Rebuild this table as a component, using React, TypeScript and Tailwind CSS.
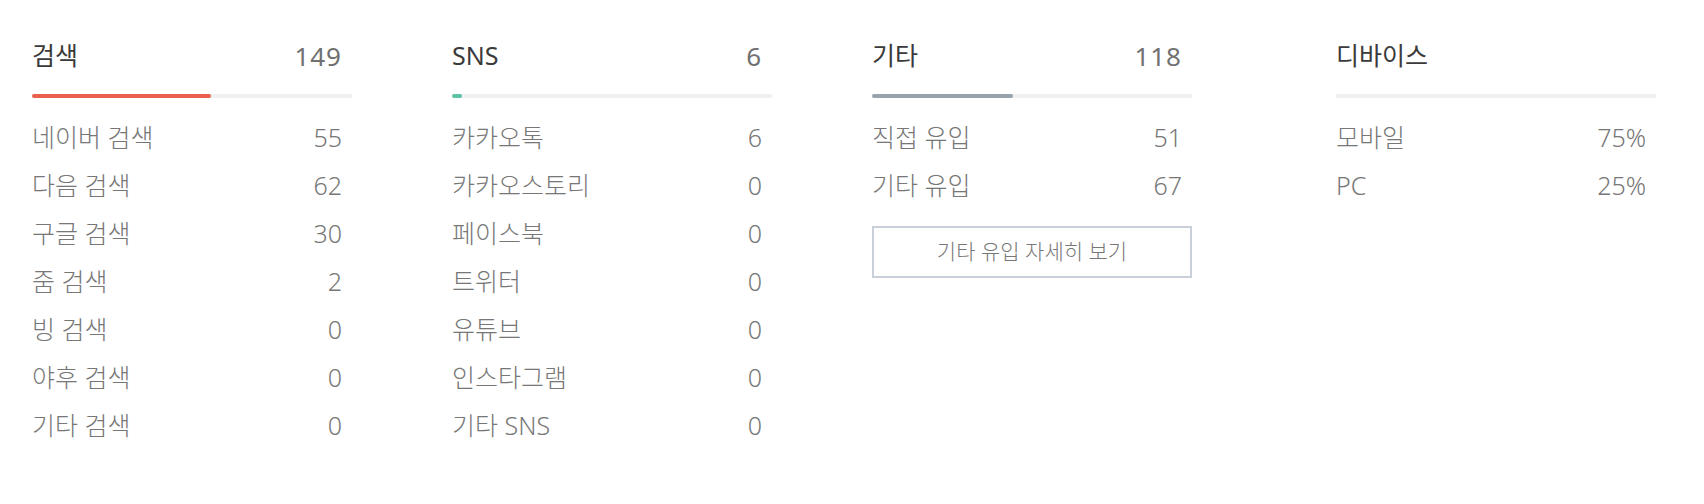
import React from "react";

type Row = { label: string; value: string };

type Group = {
  title: string;
  total?: string;
  fill: string;
  barColor: string;
  rows: Row[];
  button?: string;
  className: string;
};

const GROUPS: Group[] = [
  {
    title: "검색",
    total: "149",
    fill: "w-[56%]",
    barColor: "bg-[#e9604c]",
    className: "mr-[100px]",
    rows: [
      { label: "네이버 검색", value: "55" },
      { label: "다음 검색", value: "62" },
      { label: "구글 검색", value: "30" },
      { label: "줌 검색", value: "2" },
      { label: "빙 검색", value: "0" },
      { label: "야후 검색", value: "0" },
      { label: "기타 검색", value: "0" },
    ],
  },
  {
    title: "SNS",
    total: "6",
    fill: "w-[10px]",
    barColor: "bg-[#5cc3a8]",
    className: "mr-[100px]",
    rows: [
      { label: "카카오톡", value: "6" },
      { label: "카카오스토리", value: "0" },
      { label: "페이스북", value: "0" },
      { label: "트위터", value: "0" },
      { label: "유튜브", value: "0" },
      { label: "인스타그램", value: "0" },
      { label: "기타 SNS", value: "0" },
    ],
  },
  {
    title: "기타",
    total: "118",
    fill: "w-[44%]",
    barColor: "bg-[#98a2ab]",
    className: "mr-[144px]",
    rows: [
      { label: "직접 유입", value: "51" },
      { label: "기타 유입", value: "67" },
    ],
    button: "기타 유입 자세히 보기",
  },
  {
    title: "디바이스",
    fill: "w-0",
    barColor: "bg-transparent",
    className: "",
    rows: [
      { label: "모바일", value: "75%" },
      { label: "PC", value: "25%" },
    ],
  },
];

function StatGroup({ group }: { group: Group }) {
  return (
    <div className={`w-[320px] shrink-0 ${group.className}`}>
      {/* Header */}
      <div className="flex h-[40px] items-center justify-between pr-[10px]">
        <span className="text-[25px] font-normal text-[#3a3a3a]">{group.title}</span>
        {group.total && <span className="text-[26px] font-normal tracking-[1px] text-[#707070]">{group.total}</span>}
      </div>

      {/* Progress */}
      <div className="mt-[18px] h-[4px] w-full rounded-full bg-[#f0f0f0]">
        <div className={`h-full rounded-full ${group.fill} ${group.barColor}`}></div>
      </div>

      {/* Rows */}
      <div className="mt-[16px]">
        {group.rows.map((row) => (
          <div
            key={row.label}
            className="flex h-[48px] items-center justify-between pr-[10px] text-[25px] font-light text-[#777]"
          >
            <span>{row.label}</span>
            <span>{row.value}</span>
          </div>
        ))}
      </div>

      {group.button && (
        <button className="mt-[16px] h-[52px] w-full border-2 border-[#c9d0da] bg-white text-[21px] font-light text-[#777]">
          {group.button}
        </button>
      )}
    </div>
  );
}

export default function App() {
  return (
    <div
      className="flex min-h-[504px] w-full bg-white pl-[32px] pt-[36px]"
      style={{ fontFamily: '"Noto Sans", "Noto Sans CJK KR", sans-serif' }}
    >
      {GROUPS.map((g) => (
        <StatGroup key={g.title} group={g} />
      ))}
    </div>
  );
}
